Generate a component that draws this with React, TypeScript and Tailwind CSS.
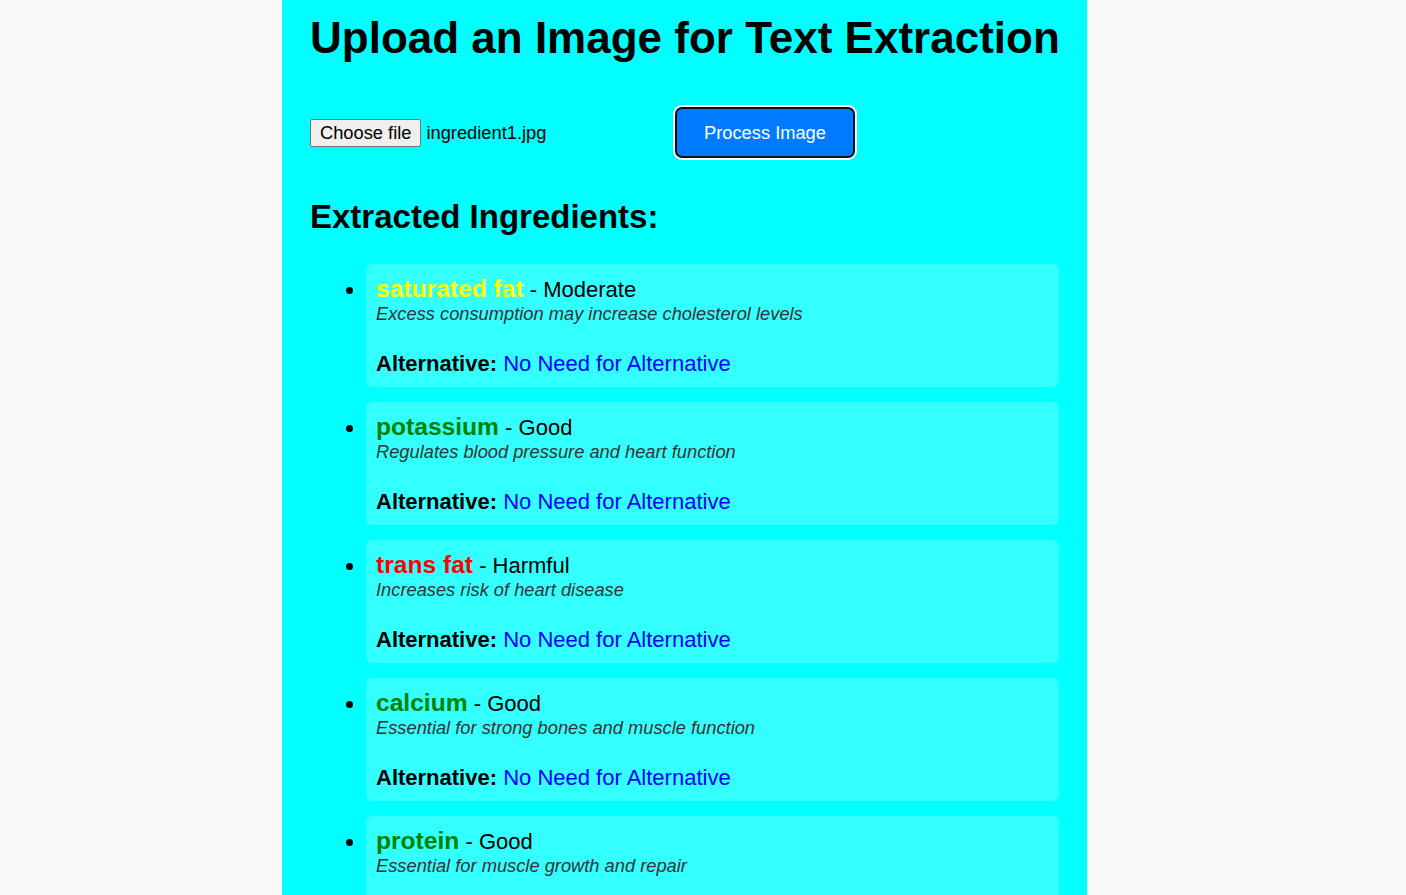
const INGREDIENTS = [
  {
    name: "saturated fat",
    color: "text-[#ffff00]",
    rating: "Moderate",
    note: "Excess consumption may increase cholesterol levels",
  },
  {
    name: "potassium",
    color: "text-[#008000]",
    rating: "Good",
    note: "Regulates blood pressure and heart function",
  },
  {
    name: "trans fat",
    color: "text-[#ff0000]",
    rating: "Harmful",
    note: "Increases risk of heart disease",
  },
  {
    name: "calcium",
    color: "text-[#008000]",
    rating: "Good",
    note: "Essential for strong bones and muscle function",
  },
  {
    name: "protein",
    color: "text-[#008000]",
    rating: "Good",
    note: "Essential for muscle growth and repair",
  },
];

const IngredientCard = ({
  name,
  color,
  rating,
  note,
}: (typeof INGREDIENTS)[number]) => (
  <li className="mb-[15px] rounded-md bg-[#33ffff] px-[10px] pt-[11px] pb-[11px] text-[22px] leading-[25px]">
    <div className="text-[24.6px] leading-[28px]">
      <strong className={`font-bold leading-none ${color}`}>{name}</strong>
      <span className="text-[22px] leading-none text-black"> - {rating}</span>
    </div>
    <div className="text-[18.3px] italic leading-[21px] text-[#333333]">
      {note}
    </div>
    <div className="mt-[27px] leading-[25px]">
      <strong className="font-bold">Alternative:</strong>{" "}
      <span className="text-[#0000ff]">No Need for Alternative</span>
    </div>
  </li>
);

export default function App() {
  return (
    <div
      className="h-screen overflow-hidden bg-[#f9f9f9] text-black"
      style={{ fontFamily: '"Liberation Sans", Arial, sans-serif' }}
    >
      <div className="ml-[282px] min-h-full w-[805px] bg-[#00ffff] px-[28px] pt-[13px]">
        <h1 className="whitespace-nowrap text-[44px] font-bold leading-[normal]">
          Upload an Image for Text Extraction
        </h1>

        <div className="mt-[46px] flex items-center">
          <div className="flex w-[367px] items-center text-[18.3px] leading-[21px]">
            <button className="flex h-[28px] items-center rounded-[2px] border border-[#767676] bg-[#efefef] px-[9px]">
              Choose file
            </button>
            <span className="ml-[5px]">ingredient1.jpg</span>
          </div>
          <button className="h-[47px] w-[176px] rounded-[5px] bg-[#007bff] text-[18.3px] leading-[21px] text-white shadow-[0_0_0_2px_#101010,0_0_0_4px_#ffffff]">
            Process Image
          </button>
        </div>

        <h2 className="mt-[42px] text-[33px] font-bold leading-[normal]">
          Extracted Ingredients:
        </h2>

        <ul className="mt-[28px] list-disc pl-[56px]">
          {INGREDIENTS.map((item) => (
            <IngredientCard key={item.name} {...item} />
          ))}
        </ul>
      </div>
    </div>
  );
}
